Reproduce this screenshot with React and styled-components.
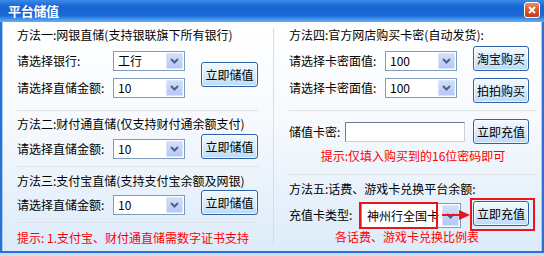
import React from "react";
import styled, { createGlobalStyle } from "styled-components";

const Global = createGlobalStyle`
  html, body { margin: 0; padding: 0; background: #fff; }
  body { font-family: "Noto Sans CJK SC", "Noto Sans", sans-serif; font-size: 12px; color: #000; }
  * { box-sizing: border-box; }
`;

const Window = styled.div`
  width: 544px;
  height: 256px;
  display: flex;
  flex-direction: column;
  background: #c9def6;
  overflow: hidden;
`;

const TitleBar = styled.div`
  height: 22px;
  flex-shrink: 0;
  display: flex;
  align-items: flex-start;
  justify-content: space-between;
  padding: 0 4px 0 8px;
  background: linear-gradient(to bottom, #3b8ae6 0%, #1865d4 30%, #1a69d8 70%, #3d8fe8 85%, #6aaef2 100%);
`;

const Title = styled.span`
  color: #fff;
  font-weight: bold;
  font-size: 13px;
  line-height: 22px;
  letter-spacing: -0.3px;
`;

const Close = styled.div`
  width: 16px;
  height: 16px;
  margin-top: 2px;
  border: 1px solid #fff;
  border-radius: 3px;
  background: linear-gradient(to bottom, #f08a5a, #d4501e 60%, #c13f12);
  display: flex;
  align-items: center;
  justify-content: center;
`;

const Frame = styled.div`
  flex: 1;
  display: flex;
  flex-direction: column;
  border-left: 2px solid #2a70d8;
  border-right: 2px solid #2a70d8;
  border-bottom: 2px solid #2a70d8;
  margin-bottom: 3px;
`;

const Body = styled.div`
  flex: 1;
  display: flex;
  border-left: 1px solid #a8cdf4;
  border-right: 1px solid #a8cdf4;
  padding: 0 4px 0 14px;
  background: linear-gradient(to bottom, #ffffff 0%, #f6f9fd 45%, #dcebfa 100%);
`;

const Column = styled.div`
  width: ${(p) => p.$w}px;
  flex-shrink: 0;
  display: flex;
  flex-direction: column;
  padding-top: 5px;
`;

const VLine = styled.div`
  width: 1px;
  margin: 6px 15px 6px 15px;
  background: #d6dde6;
`;

const Heading = styled.div`
  line-height: 16px;
  height: 16px;
  margin-top: ${(p) => p.$mt || 0}px;
  white-space: nowrap;
`;

const Hint = styled.div`
  color: #ff0000;
  line-height: 16px;
  height: 16px;
  margin-top: ${(p) => p.$mt || 0}px;
  padding-left: ${(p) => p.$pl || 0}px;
  text-align: ${(p) => (p.$center ? "center" : "left")};
  white-space: nowrap;
`;

const Divider = styled.div`
  height: 1px;
  background: #dfe4ea;
  margin-top: ${(p) => p.$mt || 0}px;
`;

const Block = styled.div`
  display: flex;
  align-items: center;
  margin-top: ${(p) => p.$mt || 0}px;
`;

const FieldStack = styled.div`
  display: flex;
  flex-direction: column;
  gap: 7px;
`;

const Row = styled.div`
  display: flex;
  align-items: ${(p) => p.$align || "center"};
  margin-top: ${(p) => p.$mt || 0}px;
  height: ${(p) => p.$h}px;
`;

const Field = styled.div`
  display: flex;
  align-items: center;
  height: 20px;
`;

const Label = styled.span`
  width: ${(p) => p.$w}px;
  flex-shrink: 0;
  line-height: 16px;
  white-space: nowrap;
  align-self: center;
`;

const SelectBox = styled.div`
  position: relative;
  width: ${(p) => p.$w || 72}px;
  height: ${(p) => p.$h || 20}px;
  border: 1px solid #7f9db9;
  background: #fff;
  display: flex;
  align-items: center;
  flex-shrink: 0;
  margin-top: ${(p) => p.$mt || 0}px;
  overflow: hidden;
`;

const SelectText = styled.span`
  flex: 1;
  padding-left: ${(p) => p.$pl || 4}px;
  font-size: ${(p) => p.$fs || 12}px;
  line-height: 16px;
  white-space: nowrap;
  overflow: hidden;
`;

const DropBtn = styled.div`
  width: 17px;
  height: calc(100% - 2px);
  margin-right: 1px;
  flex-shrink: 0;
  border: 1px solid #d9e4fb;
  border-radius: 1px;
  background: linear-gradient(to bottom, #d2defb, #b6c9f6);
  display: flex;
  align-items: center;
  justify-content: center;
`;

const Button = styled.div`
  width: ${(p) => p.$w || 57}px;
  height: 25px;
  flex-shrink: 0;
  margin-left: ${(p) => p.$ml || 0}px;
  border: 1px solid #2d62a8;
  border-radius: 3px;
  background: linear-gradient(to bottom, #f3f9fe 0%, #dcedfb 45%, #bcdaf5 100%);
  box-shadow: inset 0 0 0 1px rgba(255, 255, 255, 0.7);
  display: flex;
  align-items: center;
  justify-content: center;
  line-height: 16px;
  white-space: nowrap;
`;

const TextInput = styled.div`
  width: 120px;
  height: 20px;
  flex-shrink: 0;
  margin-right: 8px;
  background: #fff;
  border: 1px solid #6e7e90;
  border-right-color: #c9d3de;
  border-bottom-color: #c9d3de;
`;

const Annotated = styled.div`
  position: relative;
  display: flex;
  flex-shrink: 0;
`;

const RedFrame = styled.div`
  position: absolute;
  left: ${(p) => p.$l}px;
  top: ${(p) => p.$t}px;
  width: ${(p) => p.$w}px;
  height: ${(p) => p.$h}px;
  border: 2px solid #e8161a;
  pointer-events: none;
`;

const ArrowSvg = styled.svg`
  position: absolute;
  left: 81px;
  top: 6px;
  overflow: visible;
`;

const Chevron = () => (
  <svg width="9" height="6" viewBox="0 0 9 6">
    <path d="M1 1 L4.5 4.5 L8 1" fill="none" stroke="#4d6185" strokeWidth="2" />
  </svg>
);

const Select = ({ value, w, h, mt, fs, pl }) => (
  <SelectBox $w={w} $h={h} $mt={mt}>
    <SelectText $fs={fs} $pl={pl}>{value}</SelectText>
    <DropBtn>
      <Chevron />
    </DropBtn>
  </SelectBox>
);

export default function App() {
  return (
    <>
      <Global />
      <Window>
        <TitleBar>
          <Title>平台储值</Title>
          <Close>
            <svg width="8" height="8" viewBox="0 0 8 8">
              <path d="M1 1 L7 7 M7 1 L1 7" stroke="#fff" strokeWidth="2" />
            </svg>
          </Close>
        </TitleBar>
        <Frame>
          <Body>
            <Column $w={241}>
              <Heading>方法一:网银直储(支持银联旗下所有银行)</Heading>
              <Block $mt={8}>
                <FieldStack>
                  <Field>
                    <Label $w={96}>请选择银行:</Label>
                    <Select value="工行" />
                  </Field>
                  <Field>
                    <Label $w={96}>请选择直储金额:</Label>
                    <Select value="10" />
                  </Field>
                </FieldStack>
                <Button $ml={16}>立即储值</Button>
              </Block>
              <Divider $mt={12} />
              <Heading $mt={5}>方法二:财付通直储(仅支持财付通余额支付)</Heading>
              <Row $mt={2} $h={25} $align="flex-end">
                <Field>
                  <Label $w={96}>请选择直储金额:</Label>
                  <Select value="10" />
                </Field>
                <Button $ml={16}>立即储值</Button>
              </Row>
              <Divider $mt={7} />
              <Heading $mt={6}>方法三:支付宝直储(支持支付宝余额及网银)</Heading>
              <Row $mt={1} $h={25} $align="flex-end">
                <Field>
                  <Label $w={96}>请选择直储金额:</Label>
                  <Select value="10" />
                </Field>
                <Button $ml={16}>立即储值</Button>
              </Row>
              <Divider $mt={7} />
              <Hint $mt={7}>提示: 1.支付宝、财付通直储需数字证书支持</Hint>
            </Column>
            <VLine />
            <Column $w={248}>
              <Heading>方法四:官方网店购买卡密(自动发货):</Heading>
              <Row $mt={3} $h={25} $align="flex-end">
                <Field>
                  <Label $w={96}>请选择卡密面值:</Label>
                  <Select value="100" />
                </Field>
                <Button $ml={16} $w={56}>淘宝购买</Button>
              </Row>
              <Row $mt={7} $h={25} $align="flex-start">
                <Field>
                  <Label $w={96}>请选择卡密面值:</Label>
                  <Select value="100" />
                </Field>
                <Button $ml={16} $w={56}>拍拍购买</Button>
              </Row>
              <Divider $mt={7} />
              <Row $mt={8} $h={25}>
                <Label $w={56}>储值卡密:</Label>
                <TextInput />
                <Button $w={56}>立即充值</Button>
              </Row>
              <Hint $mt={4} $center>提示:仅填入购买到的16位密码即可</Hint>
              <Divider $mt={10} />
              <Heading $mt={6}>方法五:话费、游戏卡兑换平台余额:</Heading>
              <Row $mt={4} $h={27} $align="flex-start">
                <Label $w={72}>充值卡类型:</Label>
                <Annotated>
                  <Select value="神州行全国卡" w={100} h={25} mt={2} fs={12} pl={5} />
                  <RedFrame $l={-2} $t={1} $w={79} $h={27} />
                  <ArrowSvg width="28" height="14" viewBox="0 0 28 14">
                    <line x1="0" y1="8" x2="19" y2="8" stroke="#e8161a" strokeWidth="2" />
                    <polygon points="17,3 28,8 17,13" fill="#e8161a" />
                  </ArrowSvg>
                </Annotated>
                <Annotated>
                  <Button $ml={12} $w={56}>立即充值</Button>
                  <RedFrame $l={9} $t={-3} $w={65} $h={33} />
                </Annotated>
              </Row>
              <Hint $mt={1} $pl={46}>各话费、游戏卡兑换比例表</Hint>
            </Column>
          </Body>
        </Frame>
      </Window>
    </>
  );
}
